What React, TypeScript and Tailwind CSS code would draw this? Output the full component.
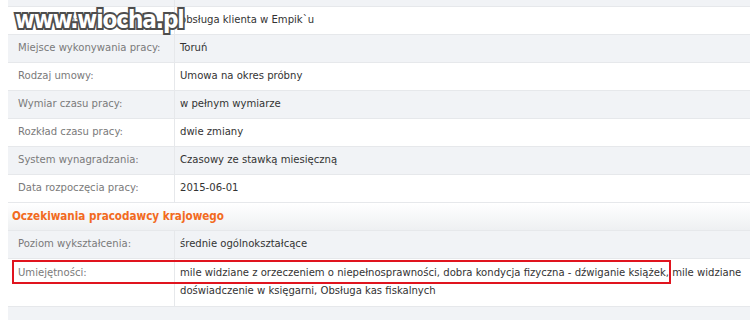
const rows1: [string, string][] = [
  ["Stanowisko:", "obsługa klienta w Empik`u"],
  ["Miejsce wykonywania pracy:", "Toruń"],
  ["Rodzaj umowy:", "Umowa na okres próbny"],
  ["Wymiar czasu pracy:", "w pełnym wymiarze"],
  ["Rozkład czasu pracy:", "dwie zmiany"],
  ["System wynagradzania:", "Czasowy ze stawką miesięczną"],
  ["Data rozpoczęcia pracy:", "2015-06-01"],
];

function Row({ label, value, gray }: { label: string; value: string; gray: boolean }) {
  return (
    <div className={`flex h-[28px] border-t border-[#e6e8eb] ${gray ? "bg-[#f1f3f6]" : "bg-white"}`}>
      <div className="w-[167px] shrink-0 border-r border-[#e6e8eb] pl-[10px] flex items-center text-[#7a7a7a]">{label}</div>
      <div className="flex-1 pl-[5px] flex items-center text-[#333]">{value}</div>
    </div>
  );
}

export default function App() {
  return (
    <div className="w-[750px] h-[320px] overflow-hidden bg-white pl-[8px] relative font-['DejaVu_Sans_Condensed','DejaVu_Sans',sans-serif] text-[11.2px]">
      <div className="-mt-[22px]">
        <Row label="" value="" gray={true} />
        {rows1.map(([l, v], i) => (
          <Row key={l} label={l} value={v} gray={i % 2 === 1} />
        ))}
        <div className="h-[28px] border-t border-[#e6e8eb] bg-gradient-to-b from-white to-[#eef0f2] pl-[4px] flex items-center font-bold text-[11.6px] text-[#f26a21]">
          Oczekiwania pracodawcy krajowego
        </div>
        <Row label="Poziom wykształcenia:" value="średnie ogólnokształcące" gray={true} />
        <div className="relative flex border-t border-[#e6e8eb] bg-white">
          <div className="w-[167px] shrink-0 border-r border-[#e6e8eb] pl-[10px] pt-[6px] text-[#7a7a7a]">Umiejętności:</div>
          <div className="flex-1 pl-[5px] pt-[5px] pb-[6px] pr-[2px] leading-[18px] text-[#333]">
            mile widziane z orzeczeniem o niepełnosprawności, dobra kondycja fizyczna - dźwiganie książek, mile widziane doświadczenie w księgarni, Obsługa kas fiskalnych
          </div>
          <div className="absolute left-[4px] top-[1px] w-[659px] h-[24px] border-2 border-[#e0141e]" />
        </div>
        <div className="h-[28px] border-t border-[#e6e8eb] bg-[#f1f3f6]" />
      </div>
      <div className="absolute left-[15px] top-[8px] origin-left scale-x-[0.9] font-['DejaVu_Sans',sans-serif] font-bold text-[24px] leading-none tracking-[-1.2px] text-white [-webkit-text-stroke:4px_#4d4d4d] [paint-order:stroke_fill]">
        www.wiocha.pl
      </div>
    </div>
  );
}
